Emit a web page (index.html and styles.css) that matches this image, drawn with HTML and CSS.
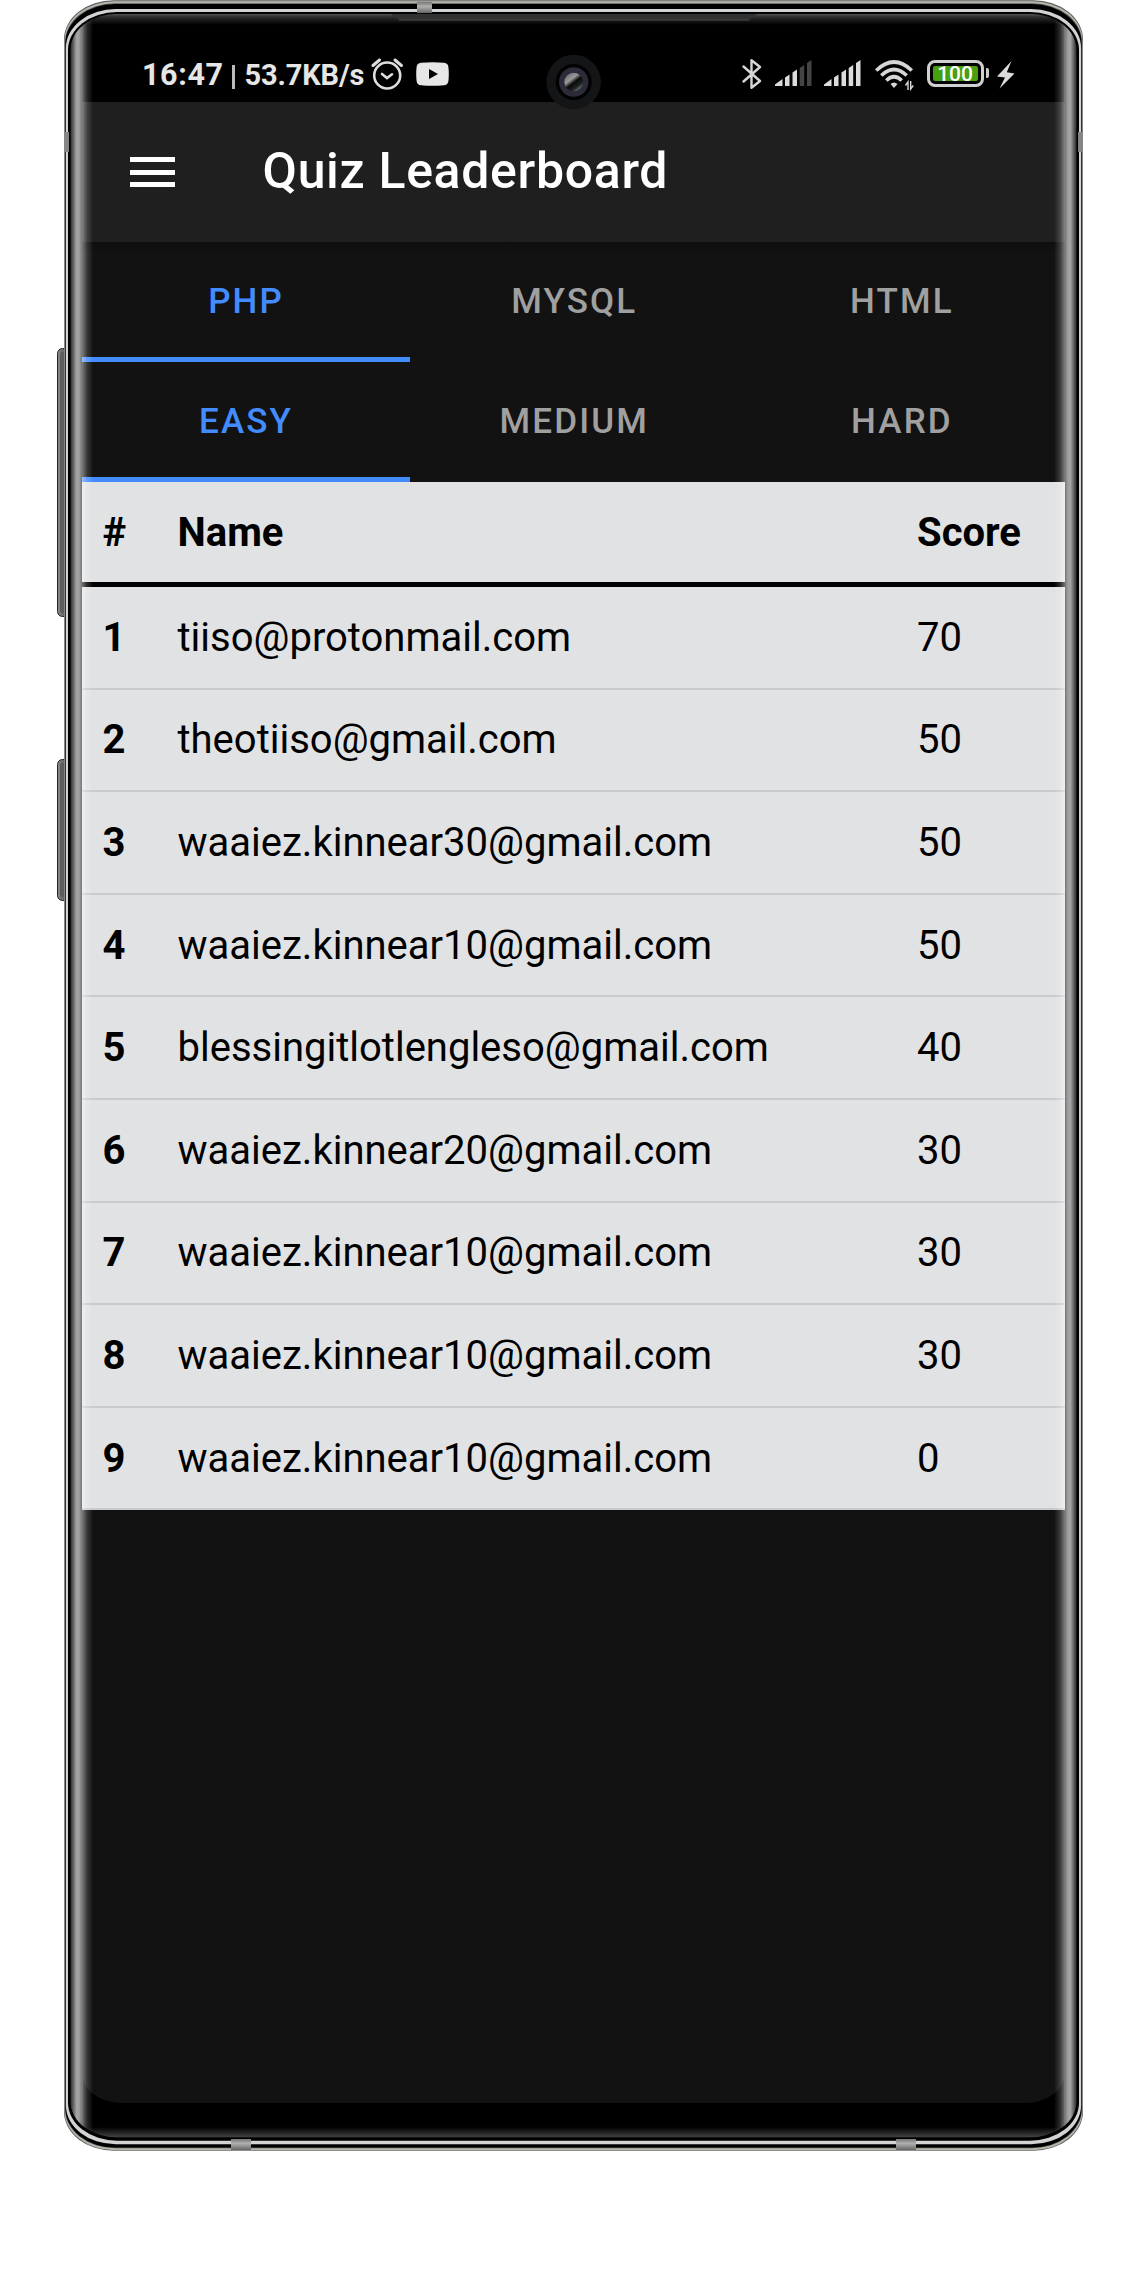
FILE: index.html
```html
<!DOCTYPE html>
<html lang="en">
<head>
<meta charset="utf-8">
<title>Quiz Leaderboard</title>
<link rel="stylesheet" href="styles.css">
</head>
<body>
<div class="phone">
  <!-- metal body, side keys and curved glass -->
  <svg class="frame" width="1140" height="2160" viewBox="0 0 1140 2160" aria-hidden="true">
    <defs>
      <linearGradient id="side" gradientUnits="userSpaceOnUse" x1="70" y1="0" x2="1077" y2="0">
        <stop offset="0" stop-color="#222"/>
        <stop offset=".002" stop-color="#484848"/>
        <stop offset=".0065" stop-color="#a4a4a4"/>
        <stop offset=".009" stop-color="#a0a0a0"/>
        <stop offset=".012" stop-color="#747474"/>
        <stop offset=".0125" stop-color="#000"/>
        <stop offset=".9875" stop-color="#000"/>
        <stop offset=".988" stop-color="#747474"/>
        <stop offset=".991" stop-color="#a0a0a0"/>
        <stop offset=".9935" stop-color="#a4a4a4"/>
        <stop offset=".998" stop-color="#484848"/>
        <stop offset="1" stop-color="#222"/>
      </linearGradient>
      <linearGradient id="key" x1="0" x2="1" y1="0" y2="0">
        <stop offset="0" stop-color="#8a8c8f"/>
        <stop offset=".35" stop-color="#6b6c6e"/>
        <stop offset="1" stop-color="#4c4d4f"/>
      </linearGradient>
      <linearGradient id="antenna" x1="0" x2="0" y1="0" y2="1">
        <stop offset="0" stop-color="#777"/>
        <stop offset=".4" stop-color="#b0b0b0"/>
        <stop offset="1" stop-color="#666"/>
      </linearGradient>
      <linearGradient id="topEdge" x1="0" x2="0" y1="0" y2="1">
        <stop offset="0" stop-color="#555"/>
        <stop offset=".3" stop-color="#2c2c2c"/>
        <stop offset="1" stop-color="#000"/>
      </linearGradient>
      <linearGradient id="bottomEdge" x1="0" x2="0" y1="0" y2="1">
        <stop offset="0" stop-color="#000"/>
        <stop offset="1" stop-color="#444"/>
      </linearGradient>
      <clipPath id="body"><rect x="70.5" y="13.8" width="1006" height="2123.8" rx="47" ry="36"/></clipPath>
    </defs>
    <rect x="57.5" y="348.5" width="14" height="268" rx="5" fill="url(#key)" stroke="#222"/>
    <rect x="60" y="352" width="10" height="261" rx="2" fill="#5c5d5f"/>
    <rect x="57.5" y="759.5" width="14" height="141" rx="5" fill="url(#key)" stroke="#222"/>
    <rect x="60" y="763" width="10" height="134" rx="2" fill="#5c5d5f"/>
    <rect x="64" y=".3" width="1019" height="2150.5" rx="50" ry="39" fill="#55575a"/>
    <rect x="64.5" y="1.2" width="1018" height="2149" rx="50" ry="39" fill="#b8b6aa"/>
    <rect x="65" y="3.2" width="1017" height="2145" rx="50" ry="39" fill="#555"/>
    <rect x="65.4" y="4" width="1016.2" height="2143.6" rx="50" ry="39" fill="#000"/>
    <rect x="65.9" y="9" width="1015.2" height="2135.3" rx="50" ry="39" fill="#d2d3d4"/>
    <rect x="68" y="12" width="1011" height="2128.7" rx="49" ry="38" fill="#000"/>
    <g clip-path="url(#body)">
      <rect x="70" y="13" width="1007" height="2125" fill="url(#side)"/>
      <rect x="84" y="13.8" width="979" height="11" fill="url(#topEdge)"/>
      <rect x="84" y="2127" width="979" height="10.6" fill="url(#bottomEdge)"/>
    </g>
    <path d="M391 14H757L749 20H399Z" fill="#303132"/>
    <path d="M399 20H749" stroke="#484848"/>
    <rect x="417" y="2" width="15" height="11" fill="url(#antenna)"/>
    <rect x="231" y="2139" width="20" height="11" fill="url(#antenna)"/>
    <rect x="896" y="2139" width="20" height="11" fill="url(#antenna)"/>
    <rect x="64.5" y="132" width="4.5" height="20" fill="#858585"/>
    <rect x="1078" y="132" width="4.5" height="20" fill="#858585"/>
  </svg>

  <div class="screen">
    <div class="status">
      <span class="clock">16:47</span>
      <span class="divider"></span>
      <span class="speed">53.7KB/s</span>
      <svg class="alarm" width="32" height="32" viewBox="0 0 32 32" fill="none" stroke="#dedede" stroke-width="2.6" stroke-linecap="round">
        <circle cx="16.2" cy="17.5" r="13"/>
        <path d="M2 7.5 8.5 2M30.400 7.500 24 2" stroke-width="3"/>
        <path d="M11 16 16 20 21 16.300"/>
      </svg>
      <svg class="video" width="33" height="24" viewBox="0 0 33 24">
        <path d="M5 .7Q16.500-.4 28 .7Q32 1 32.400 5Q33.200 12 32.400 19Q32 23 28 23.300Q16.500 24.400 5 23.300Q1 23 .6 19Q-.2 12 .6 5Q1 1 5 .7Z" fill="#e6e6e6"/>
        <path d="M13 7V17L22 12Z" fill="#000"/>
      </svg>
      <svg class="bluetooth" width="20" height="32" viewBox="0 0 20 32" fill="none" stroke="#d6d6d6" stroke-width="2.400" stroke-linejoin="round" stroke-linecap="round">
        <path d="M1.500 8.500 18 23 9.500 29.800V2.200L18 9 1.500 23.500"/>
      </svg>
      <svg class="signal" width="37" height="27" viewBox="0 0 37 27" fill="#dcdcdc">
        <path d="M0 26V24.500L7.500 19V26ZM10 26V17.500L14.500 14.500V26ZM17.500 26V12.500L22 9.500V26Z"/>
        <path d="M24.700 26V8L29.200 5V26ZM32 26V3L36.500 0V26Z" fill="#444"/>
      </svg>
      <svg class="signal2" width="37" height="27" viewBox="0 0 37 27" fill="#dcdcdc">
        <path d="M0 26V24.500L7.500 19V26ZM10 26V17.500L14.500 14.500V26ZM17.500 26V12.500L22 9.500V26ZM24.700 26V8L29.200 5V26ZM32 26V3L36.500 0V26Z"/>
      </svg>
      <svg class="wifi" width="39" height="31" viewBox="0 0 39 31" fill="none" stroke="#d6d6d6" stroke-width="3.600">
        <path d="M1.200 10.500Q19 -6.500 36.800 10.500M6.300 15.500Q19 3.500 31.700 15.500M11.300 20.500Q19 13 26.700 20.500"/>
        <path d="M15.500 24Q19 21 22.500 24L19 28Z" fill="#d6d6d6" stroke="none"/>
        <path d="M33 30V22L30.500 25.500M35.700 21V29L38.200 25.500" stroke-width="1.400"/>
      </svg>
      <div class="battery"><span class="level">100</span></div>
      <span class="nub"></span>
      <svg class="bolt" width="18" height="28" viewBox="0 0 18 28"><path d="M14.500 0 0 15.500 8 16.500 2.500 27.500 17.500 12.500 9.800 11.300Z" fill="#dcdcdc"/></svg>
    </div>

    <header class="toolbar">
      <div class="menu"><i></i><i></i><i></i></div>
      <h1 class="title">Quiz Leaderboard</h1>
    </header>

    <nav class="tabs">
      <div class="tab active">PHP</div>
      <div class="tab">MYSQL</div>
      <div class="tab">HTML</div>
    </nav>
    <nav class="tabs">
      <div class="tab active">EASY</div>
      <div class="tab">MEDIUM</div>
      <div class="tab">HARD</div>
    </nav>

    <div class="table">
      <div class="row head"><b>#</b><b>Name</b><b>Score</b></div>
      <div class="row"><b>1</b><span>tiiso@protonmail.com</span><span>70</span></div>
      <div class="row"><b>2</b><span>theotiiso@gmail.com</span><span>50</span></div>
      <div class="row"><b>3</b><span>waaiez.kinnear30@gmail.com</span><span>50</span></div>
      <div class="row"><b>4</b><span>waaiez.kinnear10@gmail.com</span><span>50</span></div>
      <div class="row"><b>5</b><span>blessingitlotlengleso@gmail.com</span><span>40</span></div>
      <div class="row"><b>6</b><span>waaiez.kinnear20@gmail.com</span><span>30</span></div>
      <div class="row"><b>7</b><span>waaiez.kinnear10@gmail.com</span><span>30</span></div>
      <div class="row"><b>8</b><span>waaiez.kinnear10@gmail.com</span><span>30</span></div>
      <div class="row"><b>9</b><span>waaiez.kinnear10@gmail.com</span><span>0</span></div>
    </div>
    <div class="empty"></div>
  </div>

  <!-- camera and the glow on the curved edges -->
  <svg class="frame" width="1140" height="2160" viewBox="0 0 1140 2160" aria-hidden="true">
    <defs>
      <linearGradient id="glowL" x1="0" x2="1" y1="0" y2="0">
        <stop offset="0" stop-color="#fff" stop-opacity=".45"/>
        <stop offset=".45" stop-color="#fff" stop-opacity=".17"/>
        <stop offset="1" stop-color="#fff" stop-opacity="0"/>
      </linearGradient>
      <linearGradient id="glowR" x1="1" x2="0" y1="0" y2="0">
        <stop offset="0" stop-color="#fff" stop-opacity=".45"/>
        <stop offset=".45" stop-color="#fff" stop-opacity=".17"/>
        <stop offset="1" stop-color="#fff" stop-opacity="0"/>
      </linearGradient>
      <linearGradient id="lens" x1=".2" y1=".1" x2=".85" y2=".95">
        <stop offset="0" stop-color="#777"/>
        <stop offset=".28" stop-color="#999"/>
        <stop offset=".5" stop-color="#080808"/>
        <stop offset=".75" stop-color="#1c2423"/>
        <stop offset="1" stop-color="#789088"/>
      </linearGradient>
      <clipPath id="glass"><rect x="70.5" y="13.8" width="1006" height="2123.8" rx="47" ry="36"/></clipPath>
    </defs>
    <g clip-path="url(#glass)">
      <rect x="82" y="18" width="11" height="2116" fill="url(#glowL)"/>
      <rect x="1054" y="18" width="11" height="2116" fill="url(#glowR)"/>
    </g>
    <circle cx="573.7" cy="82" r="27.200" fill="#131517"/>
    <circle cx="573.7" cy="82" r="18" fill="#020203"/>
    <circle cx="573.7" cy="82" r="14.700" fill="#2d2a39"/>
    <circle cx="573.7" cy="82" r="9.300" fill="url(#lens)"/>
  </svg>
</div>
</body>
</html>
```
FILE: styles.css
```css
* { box-sizing: border-box; }

body {
  margin: 0;
  background: #fff;
  font-family: Roboto, "Liberation Sans", sans-serif;
}

.phone {
  position: relative;
  width: 1140px;
  height: 2280px;
  padding-left: 82px;
}

.frame {
  position: absolute;
  left: 0;
  top: 0;
}

.screen {
  position: relative;
  display: flex;
  flex-direction: column;
  width: 983px;
  height: 2102.500px;
  border-radius: 0 0 40px 40px / 0 0 30px 30px;
  overflow: hidden;
}

.status {
  display: flex;
  align-items: flex-start;
  height: 102px;
  padding: 58px 0 0 60px;
  color: #e6e6e6;
  font-weight: 700;
  line-height: 34px;
  white-space: nowrap;
}
.status > * { flex: none; }

.clock { width: 87px; font-size: 30.500px; letter-spacing: .6px; }
.divider { width: 2.600px; height: 24px; margin: 7px 0 0 3px; background: #bbb; }
.speed { width: 126px; margin-left: 10px; font-size: 29px; letter-spacing: -.15px; line-height: 35px; }
.alarm { margin: 0; }
.video { margin: 4px 0 0 13px; }
.bluetooth { margin-left: 293px; }
.signal { margin: 2px 0 0 13px; }
.signal2 { margin: 2px 0 0 12px; }
.wifi { margin: 2px 0 0 14px; }

.battery {
  width: 57px;
  height: 27px;
  margin: 2px 0 0 13px;
  padding: 3px;
  border: 3px solid #d0d0d0;
  border-radius: 8px;
}
.level {
  display: block;
  height: 15px;
  border-radius: 2px;
  background: #46a010;
  color: #fff;
  font-size: 21px;
  font-weight: 500;
  line-height: 17px;
  text-align: center;
}
.nub { width: 3px; height: 10px; margin: 10px 8px 0 2px; border-radius: 0 2px 2px 0; background: #ccc; }
.bolt { margin-top: 3px; }

.toolbar {
  display: flex;
  align-items: center;
  height: 140px;
  padding-left: 48px;
  background: #1f1f1f;
}
.menu {
  display: flex;
  flex-direction: column;
  gap: 7.500px;
  width: 45px;
  margin-right: 87.500px;
}
.menu i { height: 5px; background: #fff; }
.title {
  margin: 0 0 2px;
  color: #fff;
  font-size: 50px;
  font-weight: 500;
  letter-spacing: .68px;
}

.tabs {
  display: grid;
  grid-template-columns: repeat(3, 1fr);
  height: 120px;
  background: #121212;
}
.toolbar + .tabs { background: linear-gradient(#0e0e0e, #121212 12px); }
.tab {
  padding: 5px 0 0 1.500px;
  border-bottom: 5px solid transparent;
  color: #a0a0a0;
  font-size: 35px;
  font-weight: 500;
  letter-spacing: 2.100px;
  line-height: 110px;
  text-align: center;
}
.active { padding-left: .5px; border-color: #428cff; color: #428cff; }

.row {
  display: grid;
  grid-template-columns: 75px 739.500px 1fr;
  height: 102.600px;
  border-bottom: 2px solid #c9cacd;
  background: #e1e2e4;
  color: #000;
  font-size: 40px;
  line-height: 60px;
}
.row > * { padding: 20.800px 20px 0 20.500px; }
.head { height: 105px; border-bottom: 5px solid #000; }
.head > * { padding-top: 21px; }

.empty { flex: 1; background: #121212; }
```
